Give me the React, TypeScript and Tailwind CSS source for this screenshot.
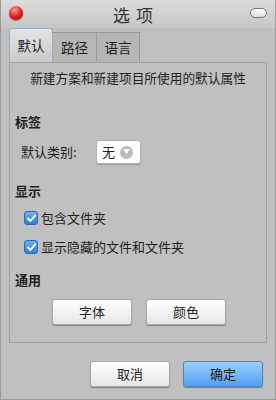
import React from "react";

const font = { fontFamily: '"Noto Sans CJK SC", "Noto Sans", sans-serif' };

function Check() {
  return (
    <span className="w-[14px] h-[14px] rounded-[3px] bg-gradient-to-b from-[#6fb0f0] to-[#2f7fd8] border border-[#2a6bb8] flex items-center justify-center">
      <svg width="11" height="11" viewBox="0 0 11 11">
        <path d="M2 5.5 L4.5 8 L9 2.5" stroke="white" strokeWidth="1.8" fill="none" strokeLinecap="round" strokeLinejoin="round" />
      </svg>
    </span>
  );
}

function Btn({ children, primary }: { children: React.ReactNode; primary?: boolean }) {
  return (
    <div
      className={
        "w-[80px] h-[26px] rounded-[3px] flex items-center justify-center text-[13px] shadow-[0_1px_1px_rgba(0,0,0,0.35)] " +
        (primary
          ? "bg-gradient-to-b from-[#9ccfff] to-[#4fa0f0] border border-[#4a86c8] text-[#1a1a1a]"
          : "bg-gradient-to-b from-[#ffffff] to-[#e6e6e6] border border-[#a8a8a8] text-[#222]")
      }
    >
      {children}
    </div>
  );
}

export default function App() {
  return (
    <div className="w-[276px] h-[400px] bg-[#c0c0c0] flex flex-col text-[#1e1e1e] overflow-hidden border-x border-b border-[#9a9a9a]" style={font}>
      {/* title bar */}
      <div className="h-[28px] flex items-center justify-between px-[8px] bg-gradient-to-b from-[#dcdcdc] to-[#c6c6c6] relative">
        <span className="w-[14px] h-[14px] rounded-full bg-[radial-gradient(circle_at_40%_30%,#ff9a9a,#e01818_55%,#8a0000)] shadow-[0_1px_1px_rgba(0,0,0,0.4)] -mt-[2px]" />
        <span className="absolute left-[112px] top-[2px] text-[17px] tracking-[6px] text-[#333]">选项</span>
        <span className="w-[17px] h-[10px] rounded-[5px] border border-[#777] bg-gradient-to-b from-[#ffffff] to-[#dcdcdc] -mt-[2px] mr-[0px]" />
      </div>
      {/* tabs */}
      <div className="h-[34px] flex items-end pl-[8px]">
        <div className="w-[44px] h-[34px] flex items-center justify-center text-[13.5px] bg-gradient-to-b from-[#e4e4e4] to-[#cacaca] border border-[#8fb0cf] border-b-0 rounded-t-[3px]">
          默认
        </div>
        <div className="w-[44px] h-[30px] flex items-center justify-center text-[13.5px] bg-[#b6b6b6] border border-[#9a9a9a] border-b-0 border-l-0">
          路径
        </div>
        <div className="w-[43px] h-[30px] flex items-center justify-center text-[13.5px] bg-[#b6b6b6] border border-[#9a9a9a] border-b-0 border-l-0">
          语言
        </div>
      </div>
      {/* panel */}
      <div className="mx-[8px] h-[281px] border border-[#a2a2a2] flex flex-col">
        <div className="h-[28px] flex items-center justify-center text-[12.7px] pt-[1px]">新建方案和新建项目所使用的默认属性</div>
        <div className="mt-[20px] h-[22px] flex items-center pl-[5px] font-bold text-[13px]">标签</div>
        <div className="mt-[7px] flex items-center pl-[11px]">
          <span className="text-[13px] w-[75px]">默认类别:</span>
          <div className="w-[45px] h-[24px] bg-white rounded-[3px] border border-[#b0b0b0] flex items-center pl-[5px] gap-[5px] shadow-[0_1px_1px_rgba(0,0,0,0.2)]">
            <span className="text-[13px]">无</span>
            <span className="w-[13px] h-[13px] rounded-full bg-[#b9b9b9] flex items-center justify-center">
              <svg width="7" height="6" viewBox="0 0 7 6"><path d="M0 0 H7 L3.5 5 Z" fill="white" /></svg>
            </span>
          </div>
        </div>
        <div className="mt-[16px] h-[22px] flex items-center pl-[5px] font-bold text-[13px]">显示</div>
        <div className="mt-[6px] flex items-center pl-[14px] gap-[3px] h-[20px] text-[13px]">
          <Check />
          <span>包含文件夹</span>
        </div>
        <div className="mt-[9px] flex items-center pl-[14px] gap-[3px] h-[20px] text-[13px]">
          <Check />
          <span>显示隐藏的文件和文件夹</span>
        </div>
        <div className="mt-[12px] h-[22px] flex items-center pl-[5px] font-bold text-[13px]">通用</div>
        <div className="mt-[8px] flex pl-[42px] gap-[14px]">
          <Btn>字体</Btn>
          <Btn>颜色</Btn>
        </div>
      </div>
      {/* bottom */}
      <div className="mt-[18px] flex justify-end gap-[13px] pr-[12px]">
        <Btn>取消</Btn>
        <Btn primary>确定</Btn>
      </div>
    </div>
  );
}
